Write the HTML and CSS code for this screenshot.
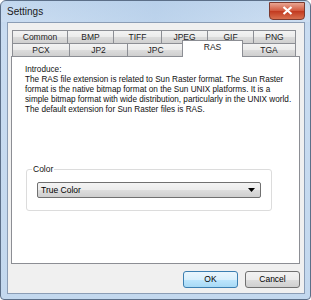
FILE: index.html
```html
<!DOCTYPE html>
<html lang="en">
<head>
    <meta charset="UTF-8">
    <title>Settings</title>
    <link rel="stylesheet" href="styles.css">
</head>
<body>
    <div class="window">
        <div class="titlebar">
            <span class="title">Settings</span>
            <span class="close">
                <svg width="11" height="9" viewBox="0 0 11 9">
                    <path d="M1.5 1 L9.5 8 M9.5 1 L1.5 8" stroke="#fff" stroke-width="2.2"/>
                </svg>
            </span>
        </div>
        <div class="client">
            <div class="tabs">
                <div class="tab-row">
                    <div class="tab w55">Common</div>
                    <div class="tab w46">BMP</div>
                    <div class="tab w48">TIFF</div>
                    <div class="tab w46">JPEG</div>
                    <div class="tab w46">GIF</div>
                    <div class="tab w43">PNG</div>
                </div>
                <div class="tab-row">
                    <div class="tab w57">PCX</div>
                    <div class="tab w58">JP2</div>
                    <div class="tab w56">JPC</div>
                    <div class="tab w59 active">RAS</div>
                    <div class="tab w54">TGA</div>
                </div>
            </div>
            <div class="panel">
                <p class="intro">Introduce:<br>The RAS file extension is related to Sun Raster format. The Sun Raster<br>format is the native bitmap format on the Sun UNIX platforms. It is a<br>simple bitmap format with wide distribution, particularly in the UNIX world.<br>The default extension for Sun Raster files is RAS.</p>
                <div class="group">
                    <span class="legend">Color</span>
                    <div class="combo">
                        <span>True Color</span>
                        <svg width="7" height="4" viewBox="0 0 7 4"><path d="M0 0 H7 L3.5 4 Z" fill="#000"/></svg>
                    </div>
                </div>
            </div>
            <div class="buttons">
                <div class="btn default">OK</div>
                <div class="btn">Cancel</div>
            </div>
        </div>
    </div>
</body>
</html>
```

FILE: styles.css
```css
body {
    margin: 0;
    background: #fff;
    font-family: "Liberation Sans", Arial, sans-serif;
    font-size: 8.5px;
    color: #000;
}

.window {
    width: 309px;
    height: 298px;
    border: 1px solid #5c6f88;
    border-radius: 6px 6px 4px 4px;
    background: linear-gradient(180deg, #bcd3ec 0%, #c9dcf1 10%, #c3d8ee 100%);
    display: flex;
    flex-direction: column;
}

.titlebar {
    height: 21px;
    display: flex;
    align-items: center;
    justify-content: space-between;
    padding: 0 5px 0 6px;
    background: linear-gradient(90deg, rgba(255,255,255,0.1), rgba(180,205,232,0.5) 50%, rgba(255,255,255,0.15));
}

.title {
    font-size: 10px;
    color: #1a1a1a;
}

.close {
    width: 34px;
    height: 16px;
    margin-top: -2px;
    border: 1px solid #7b3a30;
    border-radius: 0 0 4px 4px;
    background: linear-gradient(180deg, #e9a592 0%, #d2593f 48%, #c23a20 52%, #d86f4e 100%);
    display: flex;
    align-items: center;
    justify-content: center;
}

.client {
    flex: 1;
    margin: 0 5px 5px 6px;
    border: 1px solid #8b9db5;
    background: #f0f0f0;
    padding: 7px 4px 0 3px;
    display: flex;
    flex-direction: column;
}

.tabs {
    padding-left: 1px;
    height: 26px;
}

.tab-row {
    display: flex;
    height: 13px;
}

.tab {
    box-sizing: border-box;
    height: 13px;
    border: 1px solid #8c8e94;
    border-right: none;
    border-bottom: none;
    background: linear-gradient(180deg, #f3f3f3 0%, #ebebeb 50%, #dcdcdc 51%, #cfcfcf 100%);
    text-align: center;
    line-height: 12px;
    color: #222;
}

.tab:last-child {
    border-right: 1px solid #8c8e94;
}

.tab.active {
    background: #fff;
    height: 17px;
    margin-top: -3px;
    margin-left: -1px;
    margin-right: -1px;
    border-right: 1px solid #8c8e94;
    position: relative;
    z-index: 1;
    line-height: 13px;
}

.w43 { width: 43px; }
.w46 { width: 46px; }
.w48 { width: 48px; }
.w54 { width: 54px; }
.w55 { width: 55px; }
.w56 { width: 56px; }
.w57 { width: 57px; }
.w58 { width: 58px; }
.w59 { width: 61px; }

.panel {
    height: 206px;
    border: 1px solid #8c8e94;
    background: #fff;
    padding: 0 13px 0 13px;
}

.intro {
    margin: 8px 0 0 0;
    font-size: 8.2px;
    line-height: 10px;
    white-space: nowrap;
    color: #111;
}

.group {
    position: relative;
    margin: 54px 14px 0 1px;
    height: 42px;
    border: 1px solid #dcdcdc;
    border-radius: 3px;
    padding: 12px 10px 0 10px;
    box-sizing: border-box;
}

.legend {
    position: absolute;
    top: -6px;
    left: 5px;
    padding: 0 1px;
    background: #fff;
    line-height: 10px;
    color: #111;
}

.combo {
    height: 16px;
    box-sizing: border-box;
    border: 1px solid #707070;
    border-radius: 2px;
    background: linear-gradient(180deg, #f3f3f3 0%, #ebebeb 50%, #dddddd 51%, #cfcfcf 100%);
    display: flex;
    align-items: center;
    justify-content: space-between;
    padding: 0 5px 0 3px;
}

.buttons {
    display: flex;
    justify-content: flex-end;
    gap: 7px;
    margin-top: 7px;
}

.btn {
    box-sizing: border-box;
    width: 55px;
    height: 17px;
    border: 1px solid #707070;
    border-radius: 3px;
    background: linear-gradient(180deg, #f2f2f2 0%, #ebebeb 50%, #dddddd 51%, #cfcfcf 100%);
    text-align: center;
    line-height: 15px;
}

.btn.default {
    border-color: #3c7fb1;
    background: linear-gradient(180deg, #eaf6fd 0%, #d9f0fc 50%, #bee6fd 51%, #a7d9f5 100%);
}
```
